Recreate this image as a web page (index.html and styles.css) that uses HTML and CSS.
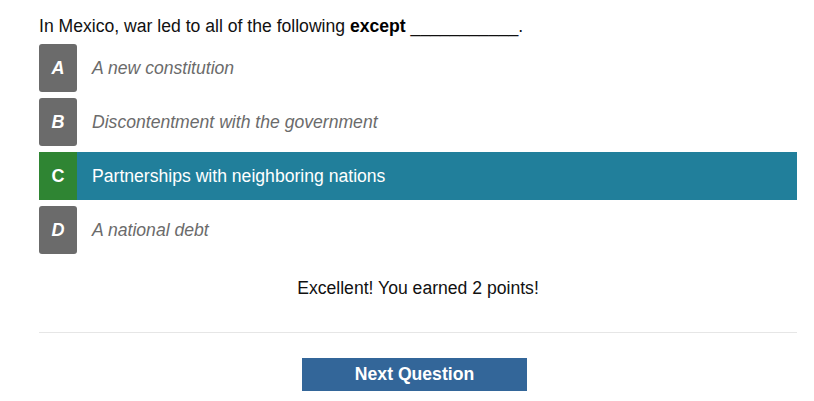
FILE: index.html
```html
<!DOCTYPE html>
<html>
<head>
<meta charset="utf-8">
<link rel="stylesheet" href="styles.css">
</head>
<body>
<div class="quiz">
  <p class="question">In Mexico, war led to all of the following <b>except</b> ___________.</p>
  <ul class="options">
    <li class="option"><span class="label">A</span><span class="text">A new constitution</span></li>
    <li class="option"><span class="label">B</span><span class="text">Discontentment with the government</span></li>
    <li class="option correct"><span class="label">C</span><span class="text">Partnerships with neighboring nations</span></li>
    <li class="option"><span class="label">D</span><span class="text">A national debt</span></li>
  </ul>
  <p class="feedback">Excellent! You earned 2 points!</p>
  <hr class="divider">
  <div class="actions"><button class="next">Next Question</button></div>
</div>
</body>
</html>
```
FILE: styles.css
```css
html, body { margin: 0; padding: 0; background: #fff; }
body { font-family: "Liberation Sans", Arial, sans-serif; color: #111; }
.quiz { margin: 0 17px 0 39px; padding-top: 16px; }
.question { margin: 0; font-size: 17.6px; line-height: 21px; color: #111; }
.question b { color: #000; }
.options { list-style: none; margin: 7px 0 0; padding: 0; display: flex; flex-direction: column; gap: 6px; }
.option { display: flex; align-items: center; height: 48px; }
.label {
  width: 38px; height: 48px; flex: none; display: flex; align-items: center; justify-content: center;
  background: #6b6b6b; color: #fff; font-weight: bold; font-style: italic; font-size: 18px; border-radius: 3px;
}
.text { margin-left: 15px; font-style: italic; color: #6b6b6b; font-size: 17.6px; }
.option.correct { background: #217f9b; }
.option.correct .label { background: #2f8533; font-style: normal; border-radius: 0; }
.option.correct .text { color: #fff; font-style: normal; }
.feedback { margin: 24px 0 0; text-align: center; font-size: 17.6px; line-height: 21px; color: #111; }
.divider { margin: 33px 0 0; border: 0; border-top: 1px solid #e6e6e6; height: 0; }
.actions { display: flex; justify-content: center; margin-top: 25px; padding-right: 7px; }
.next {
  width: 225px; height: 33px; background: #336699; color: #fff; border: 0;
  font-family: "Liberation Sans", Arial, sans-serif; font-weight: bold; font-size: 17.6px; padding: 0;
}
```
